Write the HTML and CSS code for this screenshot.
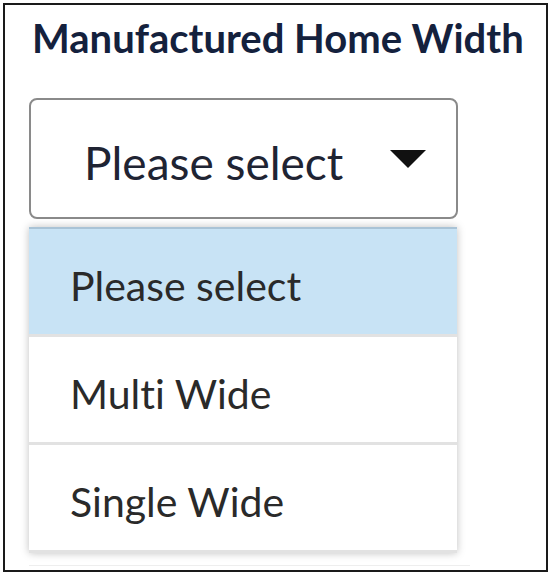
FILE: index.html
```html
<!DOCTYPE html>
<html>
<head>
<meta charset="utf-8">
<link rel="stylesheet" href="styles.css">
</head>
<body>
<div class="frame">
  <div class="field">
    <label class="label">Manufactured Home Width</label>
    <div class="select">
      <span class="select-value">Please select</span>
      <svg class="caret" width="36" height="18" viewBox="0 0 36 18"><polygon points="0,0 36,0 18,18" fill="#111"/></svg>
    </div>
    <ul class="menu">
      <li class="option active">Please select</li>
      <li class="option">Multi Wide</li>
      <li class="option">Single Wide</li>
    </ul>
  </div>
</div>
</body>
</html>
```
FILE: styles.css
```css
* { box-sizing: border-box; }
html, body { margin: 0; padding: 0; background: #fff; }
body { font-family: Lato, "Open Sans", sans-serif; font-variant-ligatures: none; }
.frame {
  margin: 3px;
  width: 545px;
  height: 569px;
  border: 2px solid #1a1a1a;
  padding: 0 0 0 24px;
}
.field {
  width: 441px;
  border-bottom: 1px solid #eee;
  padding-bottom: 12px;
}
.label {
  display: block;
  font-weight: 700;
  font-size: 40px;
  color: #14213d;
  padding: 9px 0 0 3px;
  line-height: 48px;
  white-space: nowrap;
}
.select {
  margin-top: 36px;
  width: 429px;
  height: 121px;
  border: 2px solid #8a8a8a;
  border-radius: 8px;
  display: flex;
  align-items: center;
  justify-content: space-between;
  padding: 8px 30px 0 53px;
}
.select-value {
  font-size: 46px;
  line-height: 55px;
  color: #1f2433;
}
.caret { margin-top: -8px; }
.menu {
  list-style: none;
  margin: 8px 0 0 0;
  padding: 0;
  width: 428px;
  box-shadow: 0 0 8px rgba(0,0,0,0.25);
  border-top: 2px solid #a9c3d6;
}
.option {
  height: 108px;
  display: flex;
  align-items: center;
  padding: 8px 0 0 41px;
  font-size: 41px;
  line-height: 49px;
  color: #2a2a2a;
  border-bottom: 3px solid #e2e2e2;
}
.option.active { background: #c8e3f5; }
```
